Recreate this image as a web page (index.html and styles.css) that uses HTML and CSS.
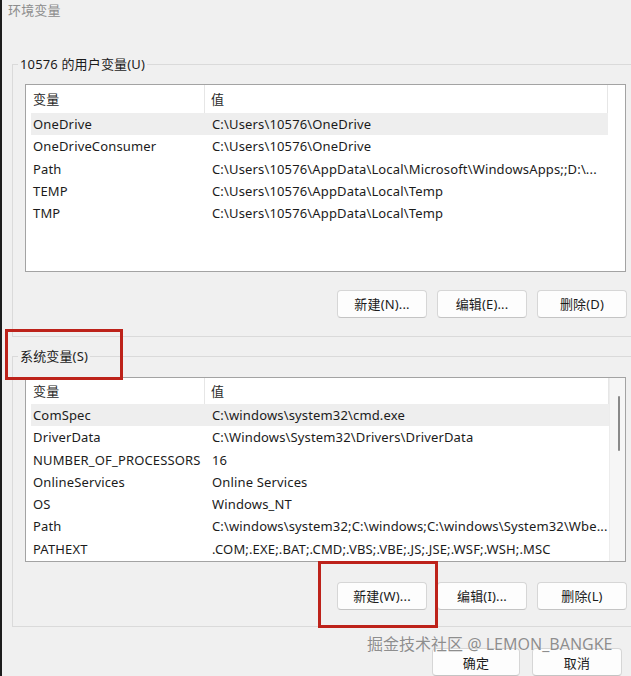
FILE: index.html
```html
<!DOCTYPE html>
<html lang="zh-CN">
<head>
<meta charset="utf-8">
<title>环境变量</title>
<link rel="stylesheet" href="styles.css">
</head>
<body>
<div class="window">
  <div class="title">环境变量</div>

  <fieldset class="group group-user">
    <legend>10576 的用户变量(U)</legend>
    <div class="list list-user">
      <div class="list-main">
        <div class="list-head"><div class="hcell hname">变量</div><div class="hcell hval">值</div></div>
        <div class="row sel"><span class="cname">OneDrive</span><span class="cval">C:\Users\10576\OneDrive</span></div>
        <div class="row"><span class="cname">OneDriveConsumer</span><span class="cval">C:\Users\10576\OneDrive</span></div>
        <div class="row"><span class="cname">Path</span><span class="cval">C:\Users\10576\AppData\Local\Microsoft\WindowsApps;;D:\...</span></div>
        <div class="row"><span class="cname">TEMP</span><span class="cval">C:\Users\10576\AppData\Local\Temp</span></div>
        <div class="row"><span class="cname">TMP</span><span class="cval">C:\Users\10576\AppData\Local\Temp</span></div>
      </div>
      <div class="side"></div>
    </div>
    <div class="btn-row">
      <button class="btn">新建(N)...</button>
      <button class="btn">编辑(E)...</button>
      <button class="btn">删除(D)</button>
    </div>
  </fieldset>

  <fieldset class="group group-sys">
    <legend>系统变量(S)</legend>
    <div class="list list-sys">
      <div class="list-main">
        <div class="list-head"><div class="hcell hname">变量</div><div class="hcell hval">值</div></div>
        <div class="row sel"><span class="cname">ComSpec</span><span class="cval">C:\windows\system32\cmd.exe</span></div>
        <div class="row"><span class="cname">DriverData</span><span class="cval">C:\Windows\System32\Drivers\DriverData</span></div>
        <div class="row"><span class="cname">NUMBER_OF_PROCESSORS</span><span class="cval">16</span></div>
        <div class="row"><span class="cname">OnlineServices</span><span class="cval">Online Services</span></div>
        <div class="row"><span class="cname">OS</span><span class="cval">Windows_NT</span></div>
        <div class="row"><span class="cname">Path</span><span class="cval">C:\windows\system32;C:\windows;C:\windows\System32\Wbe...</span></div>
        <div class="row"><span class="cname">PATHEXT</span><span class="cval">.COM;.EXE;.BAT;.CMD;.VBS;.VBE;.JS;.JSE;.WSF;.WSH;.MSC</span></div>
      </div>
      <div class="side scrollbar"><div class="thumb"></div></div>
    </div>
    <div class="btn-row">
      <button class="btn">新建(W)...</button>
      <button class="btn">编辑(I)...</button>
      <button class="btn">删除(L)</button>
    </div>
  </fieldset>

  <div class="dialog-btns">
    <button class="btn btn-ok">确定</button>
    <button class="btn btn-cancel">取消</button>
  </div>

  <div class="mark mark-label"></div>
  <div class="mark mark-new"></div>
  <div class="watermark">掘金技术社区 @ LEMON_BANGKE</div>
</div>
</body>
</html>
```

FILE: styles.css
```css
html, body {
  margin: 0;
  padding: 0;
  background: #f0f0f0;
}

.window {
  position: relative;
  width: 629px;
  height: 676px;
  overflow: hidden;
  background: #f0f0f0;
  border-left: 2px solid #1c1c1c;
  font-family: "Noto Sans", "Noto Sans CJK SC", sans-serif;
  font-size: 13px;
  letter-spacing: 0.15px;
  color: #1b1b1b;
}

.title {
  padding: 2px 0 0 6px;
  height: 16px;
  line-height: 16px;
  color: #8d8d8d;
}

.group {
  margin: 0 -19px 0 10px;
  padding: 12px 12px 18px 12px;
  min-width: 0;
  border: 1px solid #dadada;
}

.group legend {
  margin-left: -7px;
  padding: 0 2px;
  line-height: 16px;
  height: 16px;
  color: #1b1b1b;
}

.group-user {
  margin-top: 38px;
}

.group-sys {
  margin-top: 11px;
  padding-top: 13px;
  padding-bottom: 16px;
}

.list {
  display: flex;
  width: 599px;
  background: #fff;
  border: 1px solid #a3a3a3;
}

.list-user { height: 186px; }
.list-sys { height: 183px; }

.list-main {
  flex: 1;
  overflow: hidden;
}

.list-head {
  display: flex;
  height: 28px;
  line-height: 28px;
  color: #2a2a2a;
}

.list-sys .list-head {
  height: 26px;
  line-height: 26px;
}

.hcell {
  box-sizing: border-box;
  border-right: 1px solid #e6e6e6;
}

.hname {
  width: 179px;
  padding-left: 7px;
}

.hval {
  flex: 1;
  padding-left: 6px;
}

.row {
  display: flex;
  margin-left: 5px;
  height: 22.3px;
  line-height: 22px;
  padding-left: 2px;
  white-space: nowrap;
}

.row.sel {
  background: #eeeeee;
}

.cname {
  width: 179px;
  flex: none;
}

.cval {
  flex: 1;
  overflow: hidden;
}

.side {
  width: 17px;
  flex: none;
}

.scrollbar {
  background: #f6f6f6;
  border-left: 1px solid #ececec;
  width: 16px;
  padding-top: 18px;
  box-sizing: border-box;
}

.thumb {
  width: 2px;
  height: 55px;
  margin-left: 8px;
  border-radius: 1px;
  background: #8a8a8a;
}

.btn-row {
  display: flex;
  justify-content: flex-end;
  gap: 10px;
  margin-top: 18px;
  padding-right: 10px;
}

.group-sys .btn-row {
  margin-top: 20px;
}

.btn {
  width: 90px;
  height: 28px;
  padding: 0;
  box-sizing: border-box;
  background: #fdfdfd;
  border: 1px solid #d6d6d6;
  border-bottom-color: #c4c4c4;
  border-radius: 4px;
  font-family: "Noto Sans", "Noto Sans CJK SC", sans-serif;
  font-size: 13px;
  line-height: 16px;
  letter-spacing: 0.15px;
  color: #1b1b1b;
}

.dialog-btns {
  display: flex;
  justify-content: flex-end;
  gap: 12px;
  margin-top: 21px;
  padding-right: 9px;
}

.dialog-btns .btn {
  line-height: 13px;
  padding-top: 3px;
}

.btn-ok {
  width: 88px;
}

.mark {
  position: absolute;
  box-sizing: border-box;
  border: 3px solid #bd221a;
}

.mark-label {
  left: 3px;
  top: 329px;
  width: 118px;
  height: 51px;
}

.mark-new {
  left: 316px;
  top: 561px;
  width: 120px;
  height: 67px;
}

.watermark {
  position: absolute;
  left: 365px;
  top: 636px;
  font-size: 16px;
  line-height: 16px;
  letter-spacing: 0;
  color: #8e8e8e;
  white-space: nowrap;
  text-shadow: 0 0 1px #ffffff;
}
```
